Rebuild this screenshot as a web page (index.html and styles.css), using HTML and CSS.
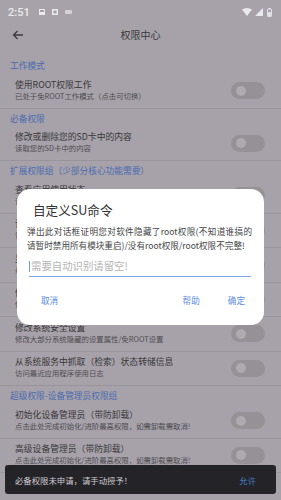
FILE: index.html
```html
<!DOCTYPE html>
<html lang="zh">
<head>
<meta charset="utf-8">
<link rel="stylesheet" href="styles.css">
</head>
<body>
<div class="screen">
  <div class="status">
    <span class="time">2:51</span>
    <span class="sicon sq"></span>
    <span class="sicon sq2"></span>
    <span class="sicon msg"></span>
    <span class="spacer"></span>
    <svg class="wifi" width="10" height="8" viewBox="0 0 10 8"><path d="M0 1.5 Q5 -1.5 10 1.5 L5 8 Z" fill="#ece9ee"/></svg>
    <svg class="sig" width="8" height="8" viewBox="0 0 8 8"><path d="M0 8 L8 0 L8 8 Z" fill="#ece9ee"/></svg>
    <svg class="bat" width="5" height="9" viewBox="0 0 5 9"><rect x="1.5" y="0" width="2" height="1" fill="#ece9ee"/><rect x="0.5" y="1" width="4" height="7.5" rx="0.6" fill="none" stroke="#ece9ee" stroke-width="0.9"/><rect x="1.2" y="4" width="2.6" height="4" fill="#ece9ee"/></svg>
  </div>
  <div class="toolbar">
    <svg class="back" width="12" height="10" viewBox="0 0 12 10"><path d="M11 5 H1.5 M5.5 1 L1.5 5 L5.5 9" fill="none" stroke="#3c3a3e" stroke-width="1.3"/></svg>
    <div class="title">权限中心</div>
  </div>

  <div class="list">
    <div class="header">工作模式</div>
    <div class="row">
      <div class="texts"><div class="t">使用ROOT权限工作</div><div class="s">已处于免ROOT工作模式（点击可切换）</div></div>
      <span class="toggle"></span>
    </div>
    <div class="header">必备权限</div>
    <div class="row">
      <div class="texts"><div class="t">修改或删除您的SD卡中的内容</div><div class="s">读取您的SD卡中的内容</div></div>
      <span class="toggle"></span>
    </div>
    <div class="header">扩展权限组（少部分核心功能需要）</div>
    <div class="row">
      <div class="texts"><div class="t">查看应用使用状态</div><div class="s">读取应用使用情况</div></div>
      <span class="toggle"></span>
    </div>
    <div class="row">
      <div class="texts"><div class="t">读取手机状态和身份</div><div class="s">读取设备信息</div></div>
      <span class="toggle"></span>
    </div>
    <div class="row">
      <div class="texts"><div class="t">显示在其他应用上层</div><div class="s">悬浮窗权限</div></div>
      <span class="toggle"></span>
    </div>
    <div class="row">
      <div class="texts"><div class="t">修改系统设置</div><div class="s">修改系统设置</div></div>
      <span class="toggle"></span>
    </div>
    <div class="row">
      <div class="texts"><div class="t">修改系统安全设置</div><div class="s">修改大部分系统隐藏的设置属性/免ROOT设置</div></div>
      <span class="toggle"></span>
    </div>
    <div class="row">
      <div class="texts"><div class="t">从系统服务中抓取（检索）状态转储信息</div><div class="s">访问最近应用程序使用日志</div></div>
      <span class="toggle"></span>
    </div>
    <div class="header">超级权限-设备管理员权限组</div>
    <div class="row">
      <div class="texts"><div class="t">初始化设备管理员（带防卸载）</div><div class="s">点击此处完成初始化/进阶最高权限，如需卸载需取消!</div></div>
      <span class="toggle"></span>
    </div>
    <div class="row">
      <div class="texts"><div class="t">高级设备管理员（带防卸载）</div><div class="s">点击此处完成初始化/进阶最高权限，如需卸载需取消!</div></div>
      <span class="toggle"></span>
    </div>
  </div>

  <div class="dialog">
    <div class="d-title">自定义SU命令</div>
    <div class="d-body">弹出此对话框证明您对软件隐藏了root权限(不知道谁搞的请暂时禁用所有模块重启)/没有root权限/root权限不完整!</div>
    <div class="d-input"><span class="caret"></span><span class="ph">需要自动识别请留空!</span></div>
    <div class="d-actions">
      <span class="btn">取消</span>
      <span class="spacer"></span>
      <span class="btn">帮助</span>
      <span class="btn">确定</span>
    </div>
  </div>

  <div class="snack">
    <span class="snack-text">必备权限未申请，请手动授予！</span>
    <span class="snack-btn">允许</span>
  </div>
</div>
</body>
</html>
```

FILE: styles.css
```css
* { box-sizing: border-box; }
html, body {
  margin: 0;
  padding: 0;
  width: 281px;
  height: 500px;
  overflow: hidden;
  background: #a7a2a9;
  font-family: "Noto Sans CJK SC", "Noto Sans", Roboto, sans-serif;
}
.screen {
  position: relative;
  width: 281px;
  height: 500px;
  overflow: hidden;
  background: #a7a2a9;
}
.status {
  height: 24px;
  display: flex;
  align-items: center;
  padding: 0 9px 0 8px;
  gap: 0;
}
.time {
  font-family: Roboto, sans-serif;
  font-size: 11px;
  color: #ece9ee;
  font-weight: 500;
  margin-right: 9px;
  line-height: 1;
}
.sicon { display: inline-block; margin-right: 7px; }
.sq { width: 6px; height: 6px; border: 1px solid #ece9ee; background: linear-gradient(to top, #ece9ee 45%, transparent 45%); }
.sq2 { width: 6px; height: 6px; background: #ece9ee; box-shadow: inset 0 0 0 1.5px #ece9ee, inset 0 0 0 3px #a7a2a9; }
.msg { width: 7px; height: 4px; background: #d6d2d8; border-radius: 1px; }
.spacer { flex: 1; }
.wifi { margin-right: 3px; }
.sig { margin-right: 4px; }
.toolbar {
  height: 32px;
  position: relative;
  display: flex;
  align-items: flex-start;
  justify-content: center;
  padding-top: 4px;
}
.back { position: absolute; left: 12px; top: 6px; }
.title {
  font-size: 10px;
  line-height: 14px;
  color: #3a383c;
}
.list { display: flex; flex-direction: column; }
.header {
  height: 18px;
  padding-left: 10px;
  font-size: 8.7px;
  line-height: 18px;
  color: #4a6bb0;
  padding-top: 1px;
}
.row {
  height: 34.5px;
  display: flex;
  align-items: center;
  padding: 0 16px 0 15px;
  border-bottom: 1px solid #99949c;
}
.texts { flex: 1; display: flex; flex-direction: column; padding-bottom: 2px; }
.t { font-size: 8.8px; line-height: 11px; color: #38363a; white-space: nowrap; }
.s { font-size: 7.4px; line-height: 11px; color: #4e4b51; white-space: nowrap; }
.toggle {
  width: 34px;
  height: 17px;
  border-radius: 9px;
  background: #959197;
  position: relative;
  flex: none;
}
.toggle::after {
  content: "";
  position: absolute;
  left: 5px;
  top: 3.5px;
  width: 10px;
  height: 10px;
  border-radius: 50%;
  background: #aeaab0;
}
.dialog {
  position: absolute;
  left: 17px;
  top: 189px;
  width: 247px;
  height: 136px;
  background: #ffffff;
  border-radius: 13px;
  display: flex;
  flex-direction: column;
  padding: 12px 12px 0 10px;
}
.d-title {
  font-size: 12.6px;
  line-height: 18px;
  color: #333;
  padding-left: 6px;
}
.d-body {
  margin-top: 6px;
  font-size: 8.6px;
  line-height: 13.8px;
  color: #444;
  text-align: justify;
}
.d-input {
  margin: 5px 1px 0 2px;
  height: 19px;
  border-bottom: 1px solid #7ea5ec;
  display: flex;
  align-items: center;
}
.caret { width: 1px; height: 11px; background: #6f9be8; margin-right: 1px; }
.ph { font-size: 10.4px; color: #b4b4b4; line-height: 1; }
.d-actions {
  display: flex;
  align-items: center;
  margin-top: 17px;
  padding: 0 7px 0 14px;
}
.btn { font-size: 8.6px; color: #5b8be0; line-height: 12px; }
.btn + .btn { margin-left: 28px; }
.snack {
  position: absolute;
  left: 5px;
  top: 465px;
  width: 271px;
  height: 29px;
  background: #242327;
  border-radius: 3px;
  display: flex;
  align-items: center;
  padding: 0 20px 0 10px;
}
.snack-text { flex: 1; font-size: 8.4px; color: #cfcdd1; }
.snack-btn { font-size: 8.4px; color: #4a7bc8; }
```
